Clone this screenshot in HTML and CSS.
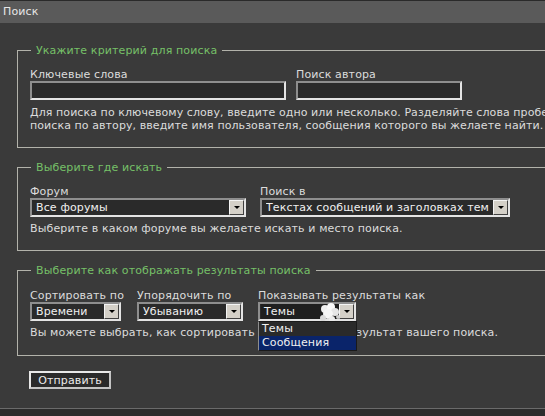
FILE: index.html
```
<!DOCTYPE html>
<html lang="ru">
<head>
<meta charset="utf-8">
<title>Поиск</title>
<link rel="stylesheet" href="styles.css">
</head>
<body>
<div class="header">Поиск</div>
<div class="main">
  <fieldset>
    <legend>Укажите критерий для поиска</legend>
    <div class="row row1">
      <div class="field">
        <label>Ключевые слова</label>
        <div class="input w256"></div>
      </div>
      <div class="field">
        <label>Поиск автора</label>
        <div class="input w166"></div>
      </div>
    </div>
    <p class="desc d6">Для поиска по ключевому слову, введите одно или несколько. Разделяйте слова пробелами. Для<br>поиска по автору, введите имя пользователя, сообщения которого вы желаете найти.</p>
  </fieldset>

  <fieldset>
    <legend>Выберите где искать</legend>
    <div class="row row2">
      <div class="field">
        <label>Форум</label>
        <div class="select w216"><span class="txt">Все форумы</span><span class="arrow"></span></div>
      </div>
      <div class="field">
        <label>Поиск в</label>
        <div class="select w250"><span class="txt">Текстах сообщений и заголовках тем</span><span class="arrow"></span></div>
      </div>
    </div>
    <p class="desc">Выберите в каком форуме вы желаете искать и место поиска.</p>
  </fieldset>

  <fieldset class="last">
    <legend>Выберите как отображать результаты поиска</legend>
    <div class="row row3">
      <div class="field">
        <label>Сортировать по</label>
        <div class="select w91"><span class="txt">Времени</span><span class="arrow"></span></div>
      </div>
      <div class="field">
        <label>Упорядочить по</label>
        <div class="select w106"><span class="txt">Убыванию</span><span class="arrow"></span></div>
      </div>
      <div class="field">
        <label>Показывать результаты как</label>
        <div class="select w98 open"><span class="txt"><span class="focus">Темы</span></span><span class="arrow"></span>
          <svg class="blob" width="26" height="22" viewBox="0 0 26 22">
            <circle cx="8" cy="7" r="4" fill="#f0f0f0"/>
            <circle cx="14" cy="5" r="4" fill="#fafafa"/>
            <circle cx="18" cy="10" r="4" fill="#e6e6e6"/>
            <circle cx="11" cy="12" r="5" fill="#f6f6f6"/>
            <circle cx="6" cy="16" r="3" fill="#dadada"/>
            <circle cx="15" cy="17" r="3" fill="#ececec"/>
            <circle cx="21" cy="15" r="2" fill="#d0d0d0"/>
          </svg>
          <ul class="dropdown">
            <li>Темы</li>
            <li class="sel">Сообщения</li>
          </ul>
        </div>
      </div>
    </div>
    <p class="desc">Вы можете выбрать, как сортировать и показывать результат вашего поиска.</p>
  </fieldset>

  <button class="submit" type="button">Отправить</button>
</div>
<div class="footer"></div>
</body>
</html>
```
FILE: styles.css
```
html, body {
  margin: 0;
  padding: 0;
}
body {
  width: 545px;
  height: 416px;
  overflow: hidden;
  background: #3a3a3a;
  color: #dcdcdc;
  font: 11px/13px "DejaVu Sans", Verdana, sans-serif;
  letter-spacing: 0.13px;
  display: flex;
  flex-direction: column;
}
.header {
  border-top: 1px solid #2a2a2a;
  height: 22px;
  line-height: 22px;
  background: #5a5a5a;
  color: #e6e6e6;
  padding-left: 3px;
}
.main {
  flex: 1;
  padding: 21px 0 0 17px;
}
fieldset {
  margin: 0 0 13px 0;
  width: 620px;
  border: 1px solid #b2b2aa;
  padding: 11px 0 15px 12px;
}
fieldset.last {
  padding-top: 12px;
  padding-bottom: 16px;
  margin-bottom: 15px;
}
legend {
  color: #76c068;
  padding: 0 5px;
  margin-left: 1px;
  line-height: 13px;
}
.row {
  display: grid;
}
.row1 { grid-template-columns: 266px 166px; }
.row2 { grid-template-columns: 230px 250px; }
.row3 { grid-template-columns: 107px 121px 98px; }
.field label {
  display: block;
  line-height: 13px;
  white-space: nowrap;
}
.input {
  height: 19px;
  box-sizing: border-box;
  border: 2px solid;
  border-color: #8e8e8e #e4e4e4 #e4e4e4 #8e8e8e;
  background: #2a2a2a;
}
.w256 { width: 256px; }
.w166 { width: 166px; }
.w216 { width: 216px; }
.w250 { width: 250px; }
.w91 { width: 91px; }
.w106 { width: 106px; }
.w98 { width: 98px; }
.select {
  position: relative;
  display: flex;
  align-items: center;
  height: 19px;
  box-sizing: border-box;
  border: 2px solid;
  border-color: #8e8e8e #e4e4e4 #e4e4e4 #8e8e8e;
  background: #2a2a2a;
  color: #f0f0f0;
  padding-left: 4px;
  white-space: nowrap;
}
.select .txt {
  flex: 1;
  overflow: hidden;
}
.select.open .txt {
  background: #1f1f1f;
  margin-left: -3px;
  padding-left: 3px;
  height: 15px;
  line-height: 15px;
}
.focus {
  display: inline-block;
  line-height: 13px;
}
.arrow {
  width: 15px;
  height: 15px;
  box-sizing: border-box;
  background: #d4d0c8;
  border: 1px solid;
  border-color: #f4f4f4 #404040 #404040 #f4f4f4;
  display: flex;
  align-items: center;
  justify-content: center;
  flex: none;
}
.arrow::after {
  content: "";
  border-left: 3px solid transparent;
  border-right: 3px solid transparent;
  border-top: 3px solid #000;
}
.blob {
  position: absolute;
  left: 57px;
  top: -2px;
}
.dropdown {
  position: absolute;
  left: -2px;
  top: 17px;
  width: 99px;
  box-sizing: border-box;
  margin: 0;
  padding: 0;
  list-style: none;
  background: #2a2a2a;
  border: 1px solid #1a1a1a;
  border-left-color: #8e8e8e;
  z-index: 2;
}
.dropdown li {
  height: 14px;
  line-height: 14px;
  padding-left: 3px;
  color: #f0f0f0;
}
.dropdown li.sel {
  background: #0a246a;
}
.desc {
  margin: 5px 0 0;
  white-space: nowrap;
  line-height: 13px;
}
.desc.d6 {
  margin-top: 6px;
  letter-spacing: 0.08px;
}
.submit {
  display: block;
  margin: 0 0 0 12px;
  width: 82px;
  height: 18px;
  box-sizing: border-box;
  border: 2px solid;
  border-color: #e8e8e8 #c4c4c4 #c4c4c4 #e8e8e8;
  background: #2a2a2a;
  color: #ececec;
  font: 11px/13px "DejaVu Sans", Verdana, sans-serif;
  letter-spacing: 0.13px;
  padding: 0;
}
.footer {
  border-top: 1px solid #6a6a6a;
  height: 7px;
  background: #2c2c2c;
}
```
